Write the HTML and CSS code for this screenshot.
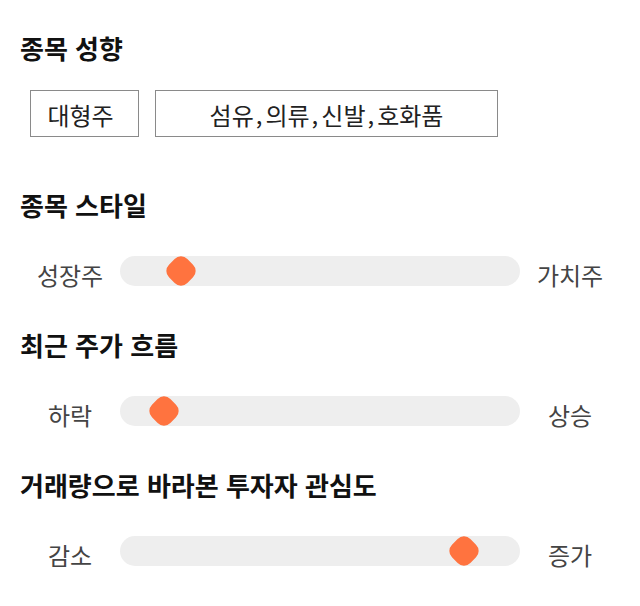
FILE: index.html
```html
<!DOCTYPE html>
<html lang="ko">
<head>
<meta charset="utf-8">
<title>종목 정보</title>
<link rel="stylesheet" href="styles.css">
</head>
<body>
  <section class="section section--tags">
    <h2 class="section-title">종목 성향</h2>
    <div class="tags">
      <span class="tag tag--size">대형주</span>
      <span class="tag tag--sector">섬유<span class="comma">,</span>의류<span class="comma">,</span>신발<span class="comma">,</span>호화품</span>
    </div>
  </section>

  <section class="section">
    <h2 class="section-title">종목 스타일</h2>
    <div class="scale">
      <span class="scale-label">성장주</span>
      <div class="track"><span class="knob" style="left: 46px"></span></div>
      <span class="scale-label">가치주</span>
    </div>
  </section>

  <section class="section">
    <h2 class="section-title">최근 주가 흐름</h2>
    <div class="scale">
      <span class="scale-label">하락</span>
      <div class="track"><span class="knob" style="left: 29px"></span></div>
      <span class="scale-label">상승</span>
    </div>
  </section>

  <section class="section">
    <h2 class="section-title">거래량으로 바라본 투자자 관심도</h2>
    <div class="scale">
      <span class="scale-label">감소</span>
      <div class="track"><span class="knob" style="left: 329px"></span></div>
      <span class="scale-label">증가</span>
    </div>
  </section>
</body>
</html>
```

FILE: styles.css
```css
* {
  box-sizing: border-box;
}

html {
  margin: 0;
  min-height: 100%;
  background: #ffffff;
}

body {
  margin: 0;
  min-height: 606px;
  padding: 34px 20px 0 20px;
  font-family: "Noto Sans CJK KR", "Noto Sans", sans-serif;
  color: #222222;
}

.section {
  display: flex;
  flex-direction: column;
  gap: 33px;
  margin-top: 45px;
}

.section--tags {
  gap: 24px;
  margin-top: 0;
}

.section--tags + .section {
  margin-top: 54px;
}

.section-title {
  margin: 0;
  height: 32px;
  padding-bottom: 4px;
  line-height: 28px;
  font-size: 26px;
  font-weight: 700;
  color: #111111;
}

.tags {
  display: flex;
  gap: 16px;
  padding-left: 10px;
}

.tag {
  display: flex;
  align-items: center;
  justify-content: center;
  height: 47px;
  padding-top: 2px;
  border: 1px solid #8a8a8a;
  font-size: 24px;
  line-height: 30px;
  color: #222222;
}

.tag--size {
  width: 109px;
  padding-right: 8px;
}

.tag--sector {
  width: 343px;
}

.comma {
  margin: 0 3px 0 2px;
}

.scale {
  display: grid;
  grid-template-columns: 100px 400px 100px;
  grid-template-rows: 30px;
  align-items: center;
}

.scale-label {
  text-align: center;
  padding-top: 7px;
  font-size: 24px;
  line-height: 30px;
  color: #444444;
}

.track {
  position: relative;
  height: 30px;
  border-radius: 15px;
  background: #eeeeee;
}

.knob {
  position: absolute;
  top: 0;
  width: 30px;
  height: 30px;
  display: flex;
  align-items: center;
  justify-content: center;
}

.knob::before {
  content: "";
  width: 26px;
  height: 26px;
  border-radius: 9px;
  background: #ff733f;
  transform: rotate(45deg);
}
```
